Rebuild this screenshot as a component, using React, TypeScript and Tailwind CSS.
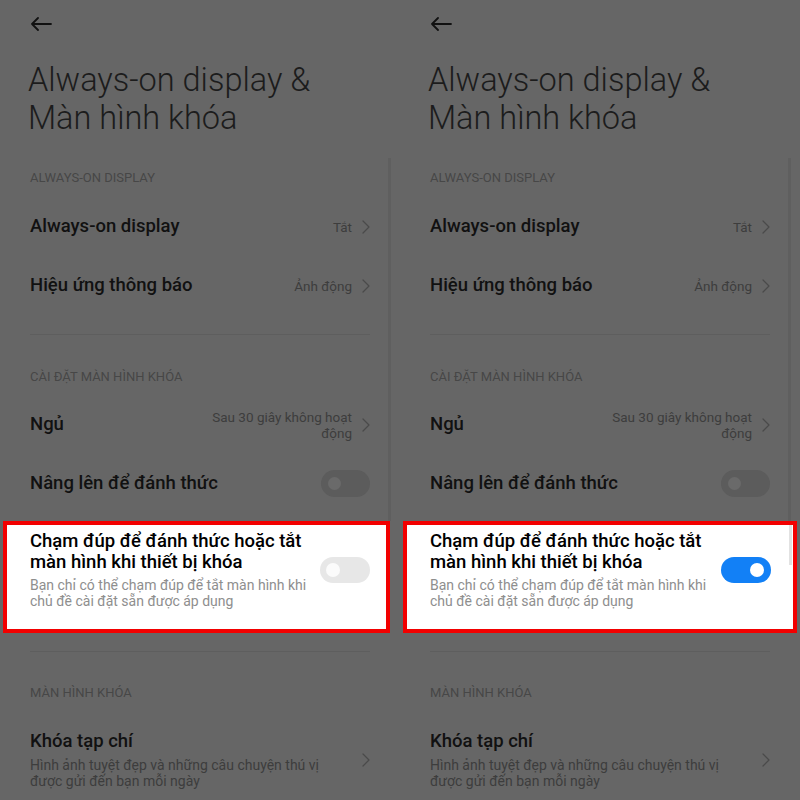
import React from 'react';

function Chevron({ color = '#4a4a4a' }: { color?: string }) {
  return (
    <svg width="8" height="14" viewBox="0 0 8 14" fill="none">
      <polyline points="1,1 7,7 1,13" stroke={color} strokeWidth="1.2" strokeLinejoin="round" strokeLinecap="round" />
    </svg>
  );
}

function BackArrow() {
  return (
    <svg width="22" height="14" viewBox="0 0 22 14" fill="none">
      <path d="M21 7H2M8 1L2 7l6 6" stroke="#111" strokeWidth="1.8" strokeLinecap="round" strokeLinejoin="round" />
    </svg>
  );
}

function SectionHeader({ text }: { text: string }) {
  return (
    <div className="h-[30px] flex items-center px-[30px] text-[13px] text-[#474747] uppercase">
      {text}
    </div>
  );
}

function NavRow({ label, value }: { label: string; value: React.ReactNode }) {
  return (
    <div className="h-[59px] flex items-center justify-between px-[30px]">
      <span className="text-[18.5px] font-medium text-[#111]">{label}</span>
      <div className="flex items-center gap-[10px]">
        <div className="text-[13.5px] leading-[16px] text-[#3d3d3d] text-right">{value}</div>
        <Chevron />
      </div>
    </div>
  );
}

function Toggle({ on, dim }: { on: boolean; dim?: boolean }) {
  if (dim) {
    return (
      <div className="w-[49px] h-[27px] rounded-full bg-[#5c5c5c] flex items-center pl-[7px]">
        <div className="w-[13px] h-[13px] rounded-full bg-[#6a6a6a]" />
      </div>
    );
  }
  if (on) {
    return (
      <div className="w-[50px] h-[26px] rounded-full bg-[#1280f6] flex items-center justify-end pr-[7px]">
        <div className="w-[14px] h-[14px] rounded-full bg-white" />
      </div>
    );
  }
  return (
    <div className="w-[50px] h-[26px] rounded-full bg-[#e7e7e7] flex items-center pl-[6px]">
      <div className="w-[14px] h-[14px] rounded-full bg-[#fbfbfb]" />
    </div>
  );
}

function Panel({ on, boxClass }: { on: boolean; boxClass: string }) {
  return (
    <div className="relative w-[400px] h-[800px] overflow-hidden bg-[#666666]">
      {/* scrollbar */}
      <div className="absolute right-[9px] top-[158px] w-[3px] h-[363px] bg-[#5f5f5f]" />

      <div className="h-[48px] flex items-center px-[30px]">
        <BackArrow />
      </div>

      <div className="mt-[13px] px-[28px] text-[32.5px] leading-[38px] font-light text-[#1c1c1c]">
        <div>Always-on display &amp;</div>
        <div>Màn hình khóa</div>
      </div>

      <div className="mt-[26px]">
        <SectionHeader text="Always-on display" />
      </div>
      <div className="mt-[4px]">
        <NavRow label="Always-on display" value="Tắt" />
        <NavRow label="Hiệu ứng thông báo" value="Ảnh động" />
      </div>

      <div className="mx-[30px] mt-[19px] h-px bg-[#5e5e5e]" />

      <div className="mt-[27px]">
        <SectionHeader text="Cài đặt màn hình khóa" />
      </div>
      <div className="mt-[3px]">
        <NavRow
          label="Ngủ"
          value={
            <>
              <div>Sau 30 giây không hoạt</div>
              <div>động</div>
            </>
          }
        />
        <div className="h-[59px] flex items-center justify-between px-[30px]">
          <span className="text-[18.5px] font-medium text-[#111]">Nâng lên để đánh thức</span>
          <Toggle on={false} dim />
        </div>
      </div>

      <div className={`relative mt-[8px] ml-[3px] ${boxClass} border-[4px] border-[#f20000] bg-white pl-[23px] pt-[6px] pb-[20px] flex items-center justify-between`}>
        {on && <div className="absolute right-[1px] top-0 w-[3px] h-[40px] bg-[#e2e2e2]" />}
        <div>
          <div className="text-[18.5px] leading-[21px] font-medium text-black">
            <div>Chạm đúp để đánh thức hoặc tắt</div>
            <div>màn hình khi thiết bị khóa</div>
          </div>
          <div className="mt-[4px] text-[14px] leading-[16px] text-[#8e8e8e]">
            <div>Bạn chỉ có thể chạm đúp để tắt màn hình khi</div>
            <div>chủ đề cài đặt sẵn được áp dụng</div>
          </div>
        </div>
        <Toggle on={on} />
      </div>

      <div className="mx-[30px] mt-[18px] h-px bg-[#5e5e5e]" />

      <div className="mt-[26px]">
        <SectionHeader text="Màn hình khóa" />
      </div>
      <div className="mt-[23px] px-[30px] flex items-center justify-between">
        <div>
          <div className="text-[18.5px] leading-[21px] font-medium text-[#111]">Khóa tạp chí</div>
          <div className="mt-[5px] text-[14px] leading-[16px] text-[#3d3d3d]">
            <div>Hình ảnh tuyệt đẹp và những câu chuyện thú vị</div>
            <div>được gửi đến bạn mỗi ngày</div>
          </div>
        </div>
        <Chevron />
      </div>
    </div>
  );
}

export default function App() {
  return (
    <div className="w-[800px] h-[800px] flex bg-[#666666] font-['Roboto',sans-serif]">
      <Panel on={false} boxClass="mr-[10px] pr-[16px]" />
      <Panel on={true} boxClass="mr-[3px] pr-[22px]" />
    </div>
  );
}
